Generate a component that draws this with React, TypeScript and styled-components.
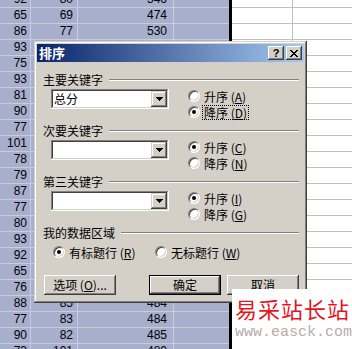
import styled, { createGlobalStyle } from "styled-components";

const GlobalStyle = createGlobalStyle`
    html, body {
        margin: 0;
        padding: 0;
        background: #fff;
    }
    body {
        width: 352px;
        height: 349px;
        overflow: hidden;
    }
`;

const SEL_BG = "#A7AFCC";
const SEL_LINE = "#C8CDDE";
const GRID_LINE = "#C0C0C0";
const FACE = "#D4D0C8";

const Screen = styled.div`
    position: relative;
    width: 352px;
    height: 349px;
    overflow: hidden;
    background: #fff;
`;

const Sheet = styled.div`
    display: flex;
    flex-direction: column;
    margin-top: -8px;
`;

const SheetRow = styled.div`
    display: grid;
    grid-template-columns: 31px 47px 96px 55px 3px 61px 1fr;
    height: 16px;
`;

const Cell = styled.div<{ $sel?: boolean; $pad?: number; $edge?: boolean }>`
    box-sizing: border-box;
    height: 16px;
    padding-right: ${props => props.$pad ?? 3}px;
    background: ${props => (props.$sel ? SEL_BG : "#fff")};
    border-bottom: 1px solid ${props => (props.$sel ? SEL_LINE : GRID_LINE)};
    border-right: ${props => (props.$edge ? `1px solid ${props.$sel ? SEL_LINE : GRID_LINE}` : "none")};
    font: 12px/15px "Liberation Sans", Arial, sans-serif;
    color: #000;
    text-align: right;
    white-space: nowrap;
    overflow: hidden;
`;

const SelectionEdge = styled.div`
    background: #000;
`;

const Dialog = styled.div`
    position: absolute;
    left: 34px;
    top: 41px;
    width: 273px;
    height: 262px;
    box-sizing: border-box;
    padding: 3px;
    display: flex;
    flex-direction: column;
    background: ${FACE};
    box-shadow: inset -1px -1px #404040, inset 1px 1px ${FACE}, inset -2px -2px #808080, inset 2px 2px #fff;
    font: 12px/14px "Noto Sans CJK SC", "Liberation Sans", sans-serif;
    color: #000;
`;

const TitleBar = styled.div`
    height: 18px;
    display: flex;
    align-items: center;
    padding: 0 2px;
    background: linear-gradient(to right, #0A246A, #A6CAF0);
`;

const TitleText = styled.span`
    flex: 1;
    color: #fff;
    font-weight: bold;
    font-size: 13px;
    line-height: 18px;
`;

const CaptionButton = styled.div`
    width: 16px;
    height: 14px;
    box-sizing: border-box;
    display: flex;
    align-items: center;
    justify-content: center;
    background: ${FACE};
    box-shadow: inset -1px -1px #404040, inset 1px 1px #fff, inset -2px -2px #808080, inset 2px 2px ${FACE};
    font: bold 11px/14px "Liberation Sans", Arial, sans-serif;
    & + & {
        margin-left: 2px;
    }
`;

const Body = styled.div`
    flex: 1;
    display: flex;
    flex-direction: column;
    padding: 11px 5px 0 6px;
`;

const Section = styled.div`
    display: flex;
    flex-direction: column;
    margin-bottom: 4px;
`;

const GroupHeader = styled.div`
    display: flex;
    align-items: center;
    height: 14px;
`;

const GroupLine = styled.div`
    flex: 1;
    margin-left: 6px;
    border-top: 1px solid #808080;
    border-bottom: 1px solid #fff;
`;

const KeyRow = styled.div`
    display: flex;
    height: 32px;
    margin-top: 1px;
    padding-left: 8px;
`;

const Combo = styled.div`
    width: 118px;
    height: 20px;
    margin-top: 1px;
    box-sizing: border-box;
    padding: 2px;
    display: flex;
    background: #fff;
    box-shadow: inset -1px -1px #fff, inset 1px 1px #808080, inset -2px -2px ${FACE}, inset 2px 2px #404040;
`;

const ComboText = styled.div`
    flex: 1;
    padding-left: 1px;
    line-height: 16px;
`;

const DropButton = styled.div`
    width: 16px;
    height: 16px;
    box-sizing: border-box;
    display: flex;
    align-items: center;
    justify-content: center;
    background: ${FACE};
    box-shadow: inset -1px -1px #404040, inset 1px 1px ${FACE}, inset -2px -2px #808080, inset 2px 2px #fff;
`;

const RadioColumn = styled.div`
    display: flex;
    flex-direction: column;
    margin-left: 19px;
`;

const RadioItem = styled.div<{ $width?: number }>`
    display: flex;
    align-items: center;
    height: 16px;
    width: ${props => (props.$width ? `${props.$width}px` : "auto")};
`;

const RadioCircle = styled.span<{ $on?: boolean }>`
    position: relative;
    flex: none;
    width: 12px;
    height: 12px;
    box-sizing: border-box;
    border-radius: 50%;
    background: #fff;
    border: 1px solid;
    border-color: #808080 #fff #fff #808080;
    box-shadow: inset 1px 1px #404040, inset -1px -1px ${FACE};
    &::after {
        content: "";
        display: ${props => (props.$on ? "block" : "none")};
        position: absolute;
        left: 3px;
        top: 3px;
        width: 4px;
        height: 4px;
        border-radius: 50%;
        background: #000;
    }
`;

const RadioLabel = styled.span<{ $focus?: boolean }>`
    margin-left: 2px;
    padding: 0 1px;
    border: 1px dotted ${props => (props.$focus ? "#000" : "transparent")};
    white-space: nowrap;
    line-height: 13px;
`;

const DataRow = styled.div`
    display: flex;
    height: 16px;
    margin-top: 4px;
    padding-left: 10px;
`;

const ButtonRow = styled.div`
    display: flex;
    margin-top: 15px;
    padding-left: 1px;
`;

const PushButton = styled.div<{ $default?: boolean; $gap?: number }>`
    width: 72px;
    height: 20px;
    box-sizing: border-box;
    margin-left: ${props => props.$gap ?? 0}px;
    display: flex;
    align-items: center;
    justify-content: center;
    background: ${FACE};
    white-space: nowrap;
    box-shadow: ${props =>
        props.$default
            ? `inset 0 0 0 1px #000, inset -2px -2px #404040, inset 2px 2px #fff, inset -3px -3px #808080, inset 3px 3px ${FACE}`
            : `inset -1px -1px #404040, inset 1px 1px #fff, inset -2px -2px #808080, inset 2px 2px ${FACE}`};
`;

const Watermark = styled.div`
    position: absolute;
    left: 232px;
    top: 289px;
    right: 0;
    bottom: 0;
    display: flex;
    flex-direction: column;
    padding: 7px 0 0 3px;
    background: #fff;
`;

const WatermarkTitle = styled.div`
    color: #E8141E;
    font: 22px/24px "Noto Sans CJK SC", sans-serif;
    letter-spacing: 1px;
    white-space: nowrap;
`;

const WatermarkUrl = styled.div`
    margin-top: 5px;
    color: #B8ABAB;
    font: 15px/16px "Liberation Mono", monospace;
    white-space: nowrap;
`;

const rows: string[][] = [
    ["92", "80", "546"],
    ["65", "69", "474"],
    ["86", "77", "530"],
    ["93", "71", "512"],
    ["75", "68", "467"],
    ["93", "84", "521"],
    ["81", "76", "503"],
    ["90", "79", "498"],
    ["77", "82", "489"],
    ["101", "88", "541"],
    ["78", "73", "470"],
    ["79", "80", "492"],
    ["87", "75", "508"],
    ["77", "70", "476"],
    ["80", "81", "495"],
    ["93", "78", "515"],
    ["92", "86", "527"],
    ["65", "72", "459"],
    ["76", "79", "481"],
    ["88", "85", "484"],
    ["77", "83", "484"],
    ["90", "82", "485"],
    ["73", "101", "480"],
];

const Accel = ({ label, k }: { label: string; k: string }) => (
    <>
        {label} (<u>{k}</u>)
    </>
);

const DropArrow = () => (
    <svg width="7" height="4" viewBox="0 0 7 4" shapeRendering="crispEdges">
        <path d="M0 0h7v1H0zM1 1h5v1H1zM2 2h3v1H2zM3 3h1v1H3z" fill="#000" />
    </svg>
);

const CloseGlyph = () => (
    <svg width="8" height="7" viewBox="0 0 8 7" shapeRendering="crispEdges">
        <path
            d="M0 0h2v1H0zM6 0h2v1H6zM1 1h2v1H1zM5 1h2v1H5zM2 2h4v1H2zM3 3h2v1H3zM2 4h4v1H2zM1 5h2v1H1zM5 5h2v1H5zM0 6h2v1H0zM6 6h2v1H6z"
            fill="#000"
        />
    </svg>
);

interface KeySectionProps {
    title: string;
    value?: string;
    asc: string;
    desc: string;
    descOn?: boolean;
    focusDesc?: boolean;
}

const KeySection = ({ title, value, asc, desc, descOn, focusDesc }: KeySectionProps) => (
    <Section>
        <GroupHeader>
            <span>{title}</span>
            <GroupLine />
        </GroupHeader>
        <KeyRow>
            <Combo>
                <ComboText>{value}</ComboText>
                <DropButton>
                    <DropArrow />
                </DropButton>
            </Combo>
            <RadioColumn>
                <RadioItem>
                    <RadioCircle $on={!descOn} />
                    <RadioLabel><Accel label="升序" k={asc} /></RadioLabel>
                </RadioItem>
                <RadioItem>
                    <RadioCircle $on={descOn} />
                    <RadioLabel $focus={focusDesc}><Accel label="降序" k={desc} /></RadioLabel>
                </RadioItem>
            </RadioColumn>
        </KeyRow>
    </Section>
);

const App = () => {
    return (
        <Screen>
            <GlobalStyle />
            <Sheet>
                {rows.map((r, i) => (
                    <SheetRow key={i}>
                        <Cell $sel $edge $pad={3}>{r[0]}</Cell>
                        <Cell $sel $edge $pad={4}>{r[1]}</Cell>
                        <Cell $sel $edge $pad={6}>{r[2]}</Cell>
                        <Cell $sel />
                        <SelectionEdge />
                        <Cell $edge />
                        <Cell />
                    </SheetRow>
                ))}
            </Sheet>

            <Dialog>
                <TitleBar>
                    <TitleText>排序</TitleText>
                    <CaptionButton>?</CaptionButton>
                    <CaptionButton>
                        <CloseGlyph />
                    </CaptionButton>
                </TitleBar>
                <Body>
                    <KeySection title="主要关键字" value="总分" asc="A" desc="D" descOn focusDesc />
                    <KeySection title="次要关键字" asc="C" desc="N" />
                    <KeySection title="第三关键字" asc="I" desc="G" />
                    <GroupHeader>
                        <span>我的数据区域</span>
                        <GroupLine />
                    </GroupHeader>
                    <DataRow>
                        <RadioItem $width={102}>
                            <RadioCircle $on />
                            <RadioLabel><Accel label="有标题行" k="R" /></RadioLabel>
                        </RadioItem>
                        <RadioItem>
                            <RadioCircle />
                            <RadioLabel><Accel label="无标题行" k="W" /></RadioLabel>
                        </RadioItem>
                    </DataRow>
                    <ButtonRow>
                        <PushButton>
                            <Accel label="选项" k="O" />...
                        </PushButton>
                        <PushButton $default $gap={33}>确定</PushButton>
                        <PushButton $gap={6}>取消</PushButton>
                    </ButtonRow>
                </Body>
            </Dialog>

            <Watermark>
                <WatermarkTitle>易采站长站</WatermarkTitle>
                <WatermarkUrl>www.easck.com</WatermarkUrl>
            </Watermark>
        </Screen>
    );
};

export default App;
